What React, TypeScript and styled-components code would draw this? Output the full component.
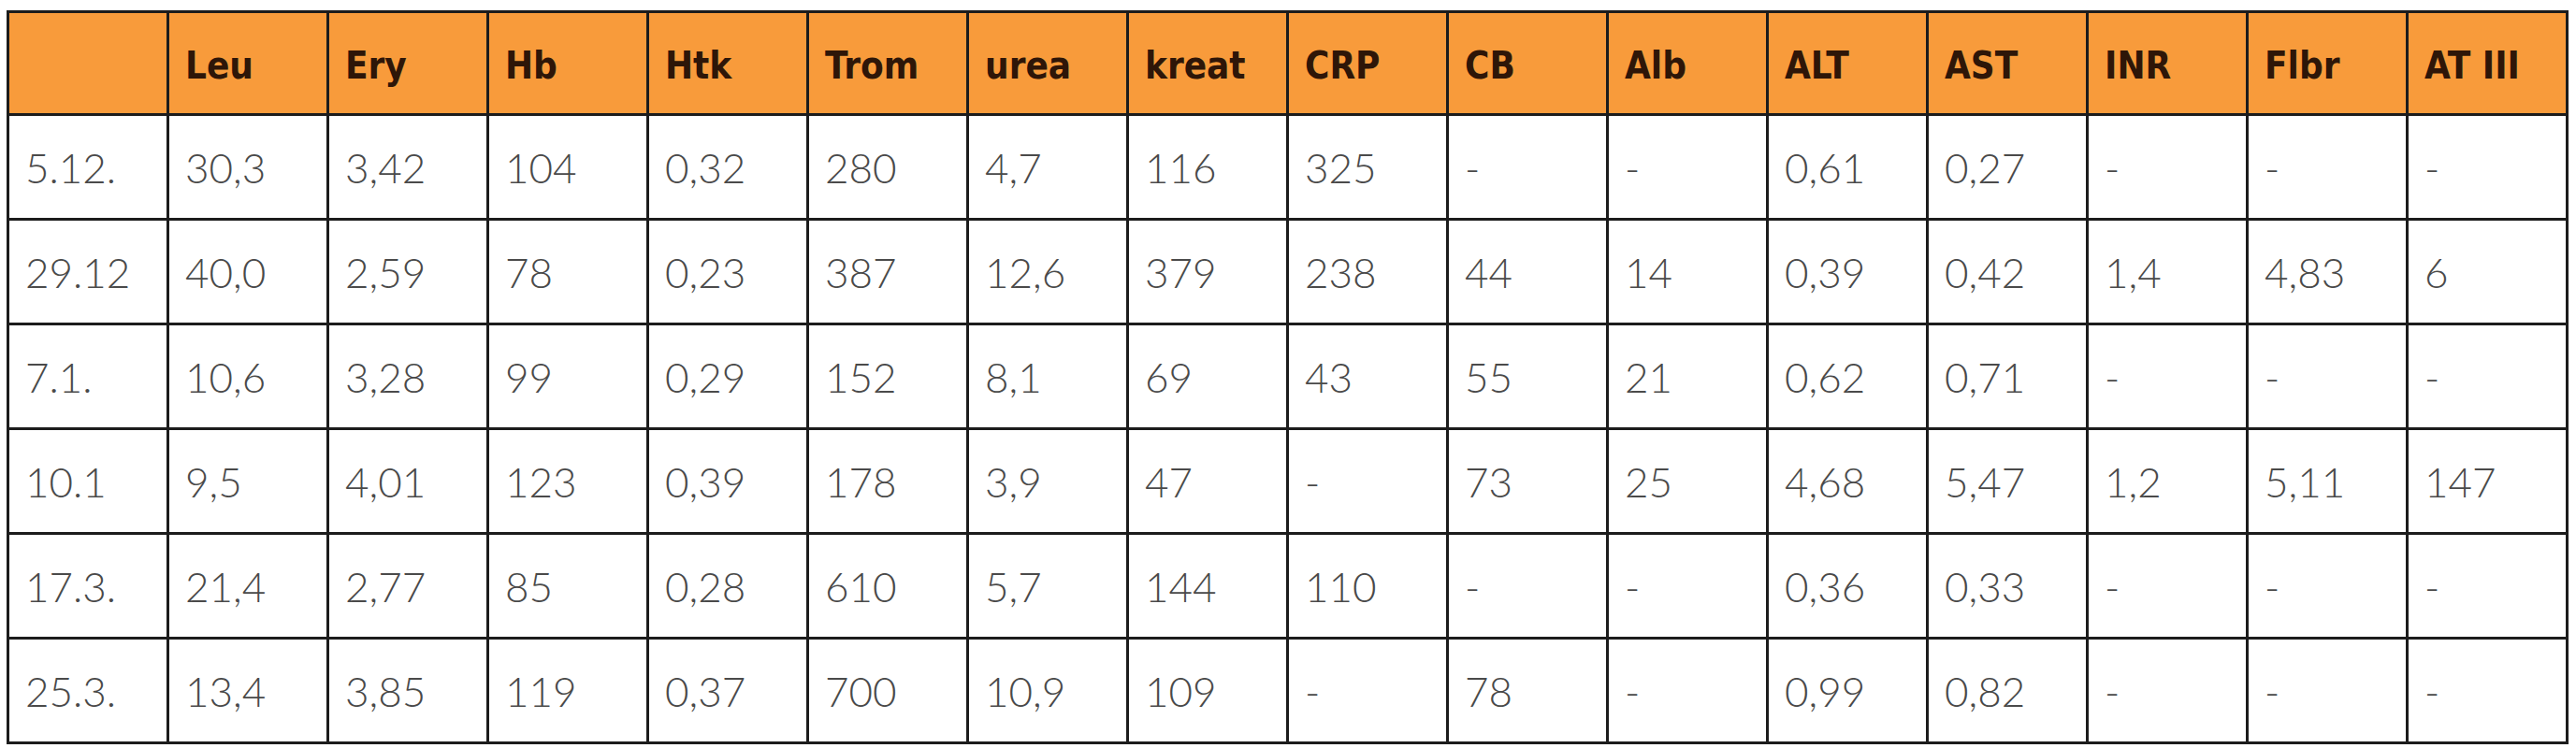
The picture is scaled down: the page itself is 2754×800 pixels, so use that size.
import React from "react";
import styled, { createGlobalStyle } from "styled-components";

const Global = createGlobalStyle`
  html, body {
    margin: 0;
    padding: 0;
    background: #ffffff;
  }
`;

const Page = styled.div`
  padding: 11px 0 0 7px;
  background: #ffffff;
`;

const Grid = styled.div`
  display: grid;
  width: 2739px;
  grid-template-columns: repeat(16, 1fr);
  grid-template-rows: 110px repeat(6, 112px);
  border-left: 3px solid #1c1c1c;
  border-top: 3px solid #1c1c1c;
  box-sizing: border-box;
`;

const Cell = styled.div<{ $head?: boolean }>`
  display: flex;
  align-items: center;
  box-sizing: border-box;
  padding: ${(p) => (p.$head ? "4px 0 0 17px" : "0 0 0 17px")};
  border-right: 3px solid #1c1c1c;
  border-bottom: 3px solid #1c1c1c;
  background: ${(p) => (p.$head ? "#f89b3b" : "#ffffff")};
  color: ${(p) => (p.$head ? "#2e1608" : "#4a4a4a")};
  font-family: ${(p) =>
    p.$head
      ? '"DejaVu Sans Condensed", "DejaVu Sans", sans-serif'
      : 'Lato, "Open Sans", sans-serif'};
  font-stretch: ${(p) => (p.$head ? "condensed" : "normal")};
  font-weight: ${(p) => (p.$head ? 700 : 300)};
  font-size: ${(p) => (p.$head ? "40px" : "44px")};
  white-space: nowrap;
  overflow: hidden;
`;

const headers = [
  "",
  "Leu",
  "Ery",
  "Hb",
  "Htk",
  "Trom",
  "urea",
  "kreat",
  "CRP",
  "CB",
  "Alb",
  "ALT",
  "AST",
  "INR",
  "Flbr",
  "AT III",
];

const rows: string[][] = [
  ["5.12.", "30,3", "3,42", "104", "0,32", "280", "4,7", "116", "325", "-", "-", "0,61", "0,27", "-", "-", "-"],
  ["29.12", "40,0", "2,59", "78", "0,23", "387", "12,6", "379", "238", "44", "14", "0,39", "0,42", "1,4", "4,83", "6"],
  ["7.1.", "10,6", "3,28", "99", "0,29", "152", "8,1", "69", "43", "55", "21", "0,62", "0,71", "-", "-", "-"],
  ["10.1", "9,5", "4,01", "123", "0,39", "178", "3,9", "47", "-", "73", "25", "4,68", "5,47", "1,2", "5,11", "147"],
  ["17.3.", "21,4", "2,77", "85", "0,28", "610", "5,7", "144", "110", "-", "-", "0,36", "0,33", "-", "-", "-"],
  ["25.3.", "13,4", "3,85", "119", "0,37", "700", "10,9", "109", "-", "78", "-", "0,99", "0,82", "-", "-", "-"],
];

export default function App() {
  return (
    <>
      <Global />
      <Page>
        <Grid>
          {headers.map((h, i) => (
            <Cell key={`h${i}`} $head>
              {h}
            </Cell>
          ))}
          {rows.map((r, ri) =>
            r.map((v, ci) => <Cell key={`${ri}-${ci}`}>{v}</Cell>)
          )}
        </Grid>
      </Page>
    </>
  );
}
